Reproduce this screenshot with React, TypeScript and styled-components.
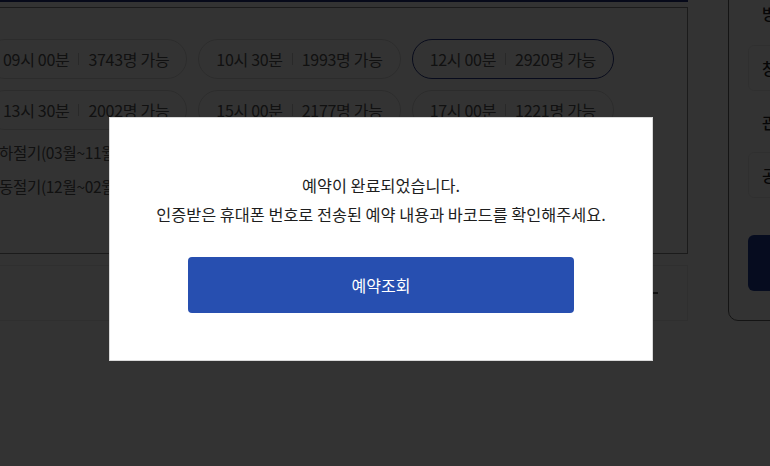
import React from "react";
import styled, { createGlobalStyle } from "styled-components";

const GlobalStyle = createGlobalStyle`
  html, body {
    margin: 0;
    padding: 0;
    background: #ffffff;
    overflow: hidden;
  }
  body {
    font-family: "Noto Sans CJK KR", "Noto Sans", sans-serif;
    color: #222;
  }
  * { box-sizing: border-box; }
`;

const Page = styled.div`
  display: flex;
  align-items: flex-start;
  gap: 40px;
  margin-left: -31px;
  width: 1100px;
`;

const Main = styled.div`
  width: 719px;
  flex: none;
  display: flex;
  flex-direction: column;
`;

const TabLine = styled.div`
  height: 2px;
  background: #22307e;
`;

const TimeBox = styled.section`
  margin-top: 5px;
  border: 1px solid #888;
  padding: 31px 30px 50px 15px;
`;

const ChipWrap = styled.div`
  display: flex;
  flex-wrap: wrap;
  gap: 11px 11px;
`;

const Chip = styled.button<{ $selected?: boolean }>`
  display: inline-flex;
  align-items: center;
  height: 40px;
  padding: 0 17px;
  border-radius: 20px;
  border: 1px solid ${(p) => (p.$selected ? "#2a3a8a" : "#dcdcdc")};
  background: #fff;
  font-family: inherit;
  font-size: 16px;
  letter-spacing: -0.3px;
  color: #555;
  white-space: nowrap;
`;

const ChipDivider = styled.span`
  width: 1px;
  height: 12px;
  background: #ccc;
  margin: 0 9px;
`;

const InfoList = styled.ul`
  list-style: none;
  margin: 5px 0 0;
  padding: 0 0 0 14px;
`;

const InfoItem = styled.li`
  font-size: 15.5px;
  line-height: 34px;
  color: #555;
  letter-spacing: -0.3px;
  white-space: nowrap;
`;

const NoticeBar = styled.div`
  margin-top: 11px;
  height: 56px;
  border: 1px solid #eaeaea;
  display: flex;
  align-items: center;
  justify-content: flex-end;
  padding-right: 29px;
`;

const Dash = styled.span`
  width: 7px;
  height: 2px;
  background: #555;
`;

const Sidebar = styled.aside`
  width: 300px;
  flex: none;
  margin-top: -24px;
  border: 1px solid #666;
  border-radius: 10px;
  padding: 26px 19px 29px;
  display: flex;
  flex-direction: column;
`;

const SideLabel = styled.div<{ $gap: number }>`
  margin-top: ${(p) => p.$gap}px;
  padding-left: 14px;
  font-size: 16px;
  line-height: 20px;
  font-weight: 500;
  color: #222;
  white-space: nowrap;
`;

const SideField = styled.div<{ $gap: number }>`
  margin-top: ${(p) => p.$gap}px;
  height: 46px;
  border: 1px solid #ececec;
  border-radius: 6px;
  display: flex;
  align-items: center;
  padding-left: 13px;
  font-size: 16px;
  font-weight: 500;
  color: #222;
  white-space: nowrap;
`;

const SideButton = styled.button`
  margin-top: 37px;
  height: 56px;
  border: none;
  border-radius: 6px;
  background: #203c9c;
  color: #fff;
  font-family: inherit;
  font-size: 16px;
`;

const Overlay = styled.div`
  position: fixed;
  inset: 0;
  background: rgba(0, 0, 0, 0.8);
  display: flex;
  align-items: center;
  justify-content: center;
  padding: 12px 8px 0 0;
`;

const Modal = styled.div`
  width: 544px;
  background: #fff;
  border: 1px solid #d9d9d9;
  padding: 53px 0 47px;
  display: flex;
  flex-direction: column;
  align-items: center;
  text-align: center;
`;

const Message = styled.p`
  margin: 0;
  font-size: 16.3px;
  line-height: 29px;
  color: #1e1e1e;
`;

const ConfirmButton = styled.button`
  margin-top: 28px;
  width: 386px;
  height: 56px;
  border: none;
  border-radius: 4px;
  background: #274fb0;
  color: #fff;
  font-family: inherit;
  font-size: 16px;
  font-weight: 400;
`;

const slots = [
  { time: "09시 00분", count: 3743 },
  { time: "10시 30분", count: 1993 },
  { time: "12시 00분", count: 2920, selected: true },
  { time: "13시 30분", count: 2002 },
  { time: "15시 00분", count: 2177 },
  { time: "17시 00분", count: 1221 },
];

export default function App() {
  return (
    <>
      <GlobalStyle />
      <Page>
        <Main>
          <TabLine />
          <TimeBox>
            <ChipWrap>
              {slots.map((s) => (
                <Chip key={s.time} $selected={s.selected}>
                  {s.time}
                  <ChipDivider />
                  {s.count}명 가능
                </Chip>
              ))}
            </ChipWrap>
            <InfoList>
              <InfoItem>하절기(03월~11월) : 09:00 ~ 18:00 (입장마감 17:00)</InfoItem>
              <InfoItem>동절기(12월~02월) : 09:00 ~ 17:30 (입장마감 16:30)</InfoItem>
            </InfoList>
          </TimeBox>
          <NoticeBar>
            <Dash />
          </NoticeBar>
        </Main>
        <Sidebar>
          <SideLabel $gap={0}>방문일자</SideLabel>
          <SideField $gap={22}>창덕궁</SideField>
          <SideLabel $gap={21}>관람인원</SideLabel>
          <SideField $gap={20}>공원 일반관람</SideField>
          <SideButton>예약하기</SideButton>
        </Sidebar>
      </Page>
      <Overlay>
        <Modal>
          <Message>
            예약이 완료되었습니다.
            <br />
            인증받은 휴대폰 번호로 전송된 예약 내용과 바코드를 확인해주세요.
          </Message>
          <ConfirmButton>예약조회</ConfirmButton>
        </Modal>
      </Overlay>
    </>
  );
}
